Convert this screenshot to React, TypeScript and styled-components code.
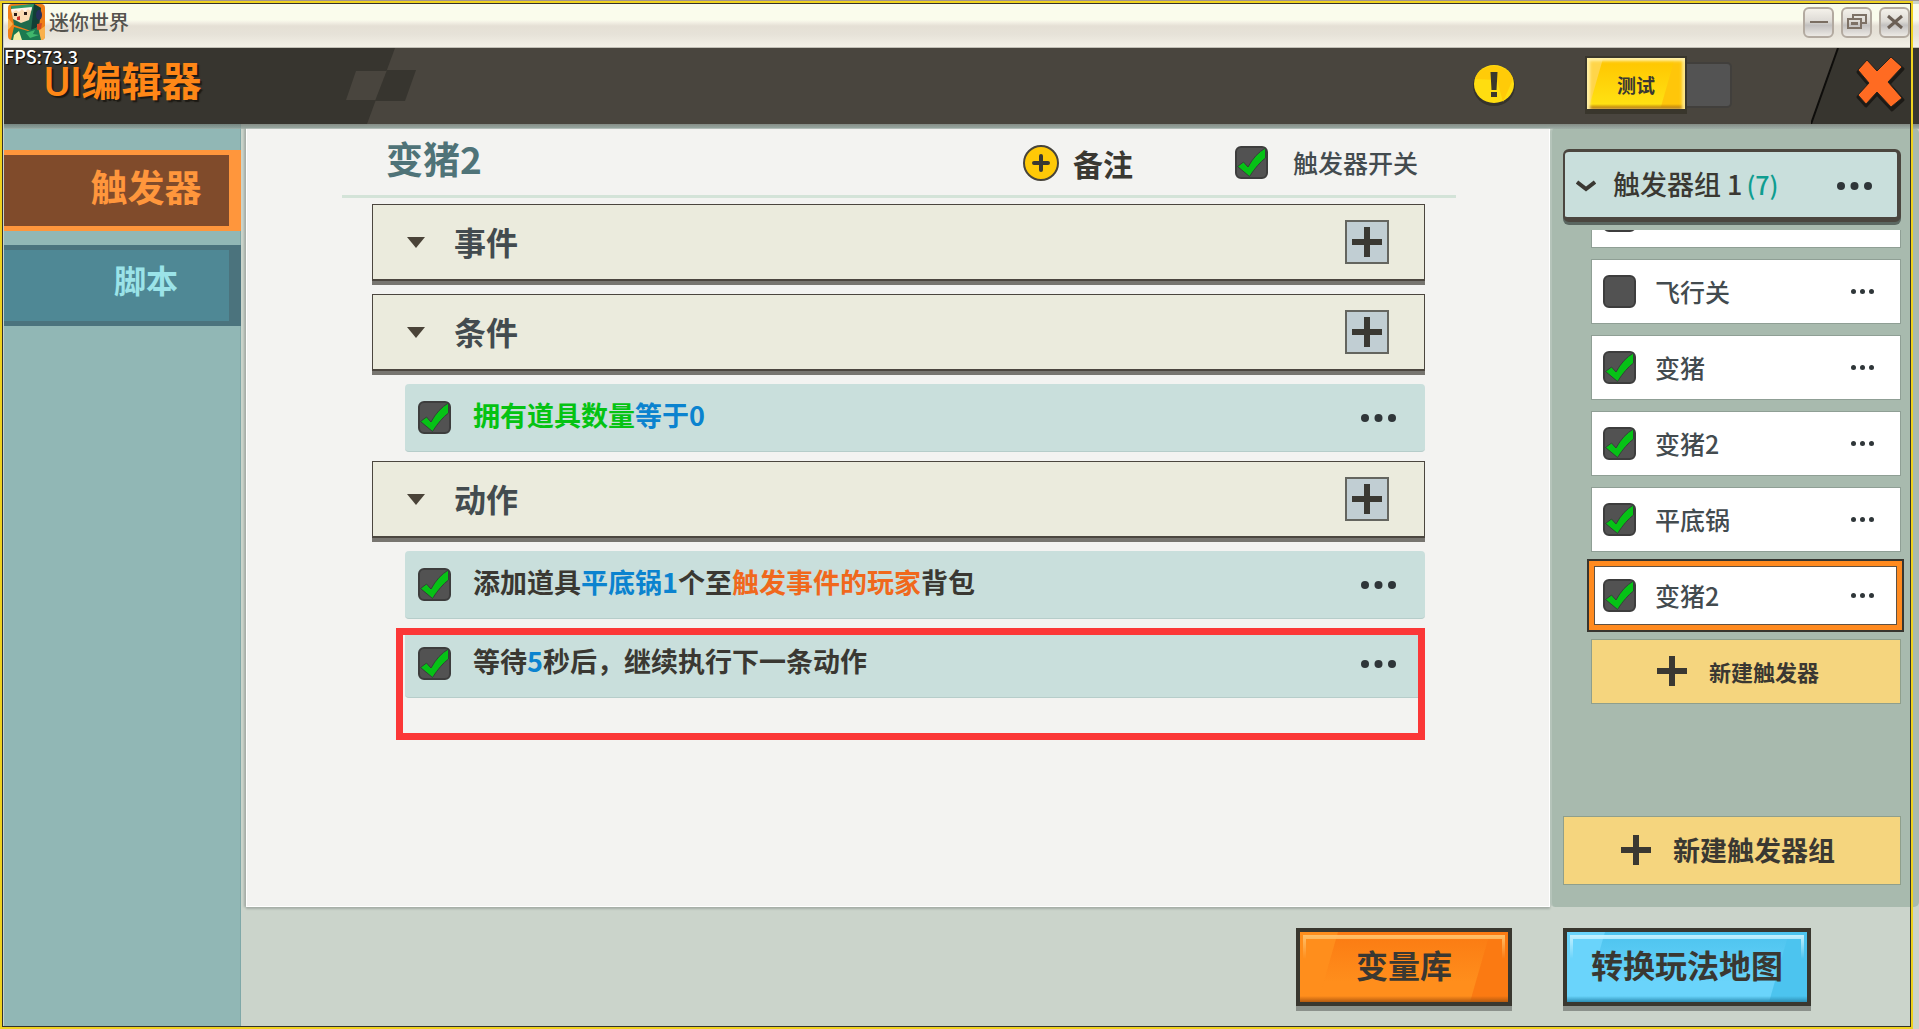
import React from "react";
import styled, { createGlobalStyle, css } from "styled-components";

const ink = "#3a3832";
const slate = "#434b4f";
const mint = "#c9dfdc";
const sage = "#a8baae";
const gold = "#f5d57e";

const GlobalStyle = createGlobalStyle`
  *, *::before, *::after { box-sizing: border-box; }
  body { margin: 0; background: #cbd4cb; }
  body, button, input {
    font-family: "Noto Sans CJK SC", "Noto Sans", sans-serif;
    font-weight: 700;
  }
  button { margin: 0; padding: 0; border: 0; background: none; color: inherit; cursor: pointer; }
  h1, h2, h3, ul { margin: 0; padding: 0; font-weight: 700; }
  ul { list-style: none; }
  svg { display: block; }
`;

const Window = styled.div`
  position: relative;
  display: flex;
  flex-direction: column;
  min-height: 100vh;
  padding: 3px 0 3px 4px;
  border-top: 1px solid #a0948d;
  overflow: hidden;
`;

const Frame = styled.div`
  position: absolute;
  inset: 0 6px 0 0;
  border: 2px solid #efd21f;
  box-shadow: inset 0 0 0 1px #33322c;
  pointer-events: none;
`;

const TitleBar = styled.div`
  display: flex;
  align-items: center;
  height: 44px;
  padding: 0 9px 8px 4px;
  background: linear-gradient(#fafcec 0, #fafcec 16px, #f4f2e6 18px, #e5e0d5 22px, #e6e2d8 30px, #f3f0e6 43px, #8f8d84 44px);
`;

const WindowName = styled.span`
  flex: 1;
  padding-left: 4px;
  font-size: 20px;
  font-weight: 500;
  line-height: 24px;
  color: #55534e;
`;

const WindowButtons = styled.div`
  display: flex;
  gap: 7px;
`;

const WindowButton = styled.button`
  display: grid;
  place-items: center;
  width: 31px;
  height: 31px;
  border: 2px solid #b3aaa0;
  border-radius: 6px;
  background: linear-gradient(#f4f1ea, #dedbd6 45%, #c3c1c0 60%, #ece9e4);
`;

const Header = styled.header`
  position: relative;
  display: flex;
  align-items: center;
  height: 76px;
  background: #49453e;
`;

const HeaderPattern = styled.svg`
  position: absolute;
  left: 0;
  top: 0;
`;

const Fps = styled.span`
  position: absolute;
  left: 0;
  top: 0;
  font-size: 18px;
  font-weight: 500;
  line-height: 16px;
  color: #fff;
  text-shadow: 1px 1px 1px #000;
`;

const AppName = styled.h1`
  position: relative;
  flex: 1;
  padding: 0 0 10px 40px;
  font-size: 40px;
  line-height: 40px;
  color: #ff8717;
  text-shadow: 2px 2px 1px #1d1a14;
`;

const Latin = styled.span`
  font-family: Roboto, sans-serif;
  font-weight: 500;
`;

const HeaderTools = styled.div`
  display: flex;
  align-items: center;
  gap: 70px;
  padding: 0 79px 3px 0;
`;

const TestSwitch = styled.div`
  display: flex;
  align-items: center;
`;

const TestButton = styled.button`
  width: 102px;
  height: 58px;
  padding-top: 4px;
  border: 2px solid #39362c;
  border-bottom-width: 5px;
  color: ${ink};
  font-size: 19px;
  line-height: 24px;
  background:
    linear-gradient(#0000 46px, #b77a0c 50px),
    linear-gradient(106deg, #ffd54a 15px, #0000 16px, #0000 84px, #ffc60a 85px),
    linear-gradient(#ffc400, #ffe112 46px);
  box-shadow: inset 3px 3px 3px #fff0a8, inset -3px 0 3px #ffe98a;
`;

const SwitchTrack = styled.span`
  width: 45px;
  height: 46px;
  border: 2px solid #413f3c;
  border-left: 0;
  border-radius: 0 5px 5px 0;
  background: #535353;
`;

const ClosePanel = styled.div`
  position: relative;
  width: 108px;
  height: 76px;
  padding: 7px 0 0 44px;
`;

const CloseButton = styled.button`
  position: relative;
`;

const Body = styled.div`
  position: relative;
  display: flex;
  flex: 1;
  &::before {
    content: "";
    position: absolute;
    inset: 0 0 auto 0;
    height: 5px;
    background: linear-gradient(#6d746e, #85958f 70%, #a4b0a9);
    opacity: 0.75;
  }
`;

const Sidebar = styled.nav`
  display: flex;
  flex-direction: column;
  gap: 14px;
  width: 237px;
  padding-top: 26px;
  background: #91b7b5;
  border-right: 1px solid #7fa8a8;
`;

const Tab = styled.button<{ $active?: boolean }>`
  height: 81px;
  margin-right: -1px;
  padding: 0 0 ${(p) => (p.$active ? 10 : 14)}px 59px;
  border: solid ${(p) => (p.$active ? "#ff963c" : "#4b737d")};
  border-width: 5px 12px 5px 0;
  background: ${(p) => (p.$active ? "#804b2b" : "#4f8895")};
  color: ${(p) => (p.$active ? "#ff963c" : "#9be3e8")};
  font-size: ${(p) => (p.$active ? 37 : 32)}px;
  line-height: 44px;
`;

const Workspace = styled.div`
  display: flex;
  flex: 1;
  flex-direction: column;
  min-width: 0;
  background: #cbd4cb;
`;

const Panels = styled.div`
  display: flex;
  flex: 1;
  padding: 4px 0 0 5px;
`;

const Editor = styled.main`
  flex: 1;
  min-width: 0;
  padding: 0 93px 0 95px;
  border: 1px solid #fff;
  background: #f3f3f1;
  box-shadow: 0 2px 2px #a5aea7, -2px 0 2px #a5aea7;
`;

const EditorHead = styled.div`
  display: flex;
  align-items: center;
  height: 69px;
  padding: 0 38px 0 44px;
  border-bottom: 3px solid #d3e3d8;
`;

const TriggerName = styled.h2`
  flex: 1;
  padding-bottom: 9px;
  font-size: 37px;
  line-height: 48px;
  color: #4f7378;
`;

const NoteButton = styled.button`
  display: flex;
  align-items: center;
  gap: 14px;
  margin-right: 102px;
  padding-top: 2px;
  font-size: 30px;
  line-height: 36px;
  color: ${ink};
`;

const Toggle = styled.label<{ $gap: number; $size: number }>`
  display: flex;
  align-items: center;
  gap: ${(p) => p.$gap}px;
  font-size: ${(p) => p.$size}px;
  line-height: 36px;
  color: ${slate};
  cursor: pointer;
`;

const SwitchText = styled.span`
  font-weight: 500;
`;

const CheckWrap = styled.span`
  display: grid;
  flex: none;
  > * { grid-area: 1 / 1; }
  > svg { pointer-events: none; }
  > input:not(:checked) + svg { visibility: hidden; }
`;

const CheckInput = styled.input`
  appearance: none;
  width: 33px;
  height: 33px;
  margin: 0;
  border: 2px solid #3d3d3d;
  border-radius: 6px;
  background: #525252;
`;

const Blocks = styled.div`
  display: flex;
  flex-direction: column;
  gap: 9px;
  padding: 6px 31px 0 30px;
`;

const BlockHead = styled.div`
  display: flex;
  align-items: center;
  height: 77px;
  margin-bottom: 4px;
  padding: 0 35px 0 34px;
  border: 1px solid #4b463f;
  border-bottom-width: 2px;
  background: #ebebdd;
  box-shadow: 0 4px 0 #777570;
`;

const BlockTitle = styled.h3`
  flex: 1;
  padding: 0 0 2px 29px;
  font-size: 32px;
  line-height: 40px;
  color: ${slate};
`;

const AddButton = styled.button`
  display: grid;
  place-items: center;
  width: 44px;
  height: 44px;
  border: 2px solid #64655f;
  background: #c1ced3;
`;

const Step = styled.div`
  position: relative;
  display: flex;
  align-items: center;
  justify-content: space-between;
  height: 68px;
  margin-left: 33px;
  padding: 0 29px 0 13px;
  border-bottom: 1px solid #b6cdca;
  border-radius: 4px;
  background: ${mint};
  & + & { margin-top: 2px; }
`;

const StepText = styled.span`
  padding-bottom: 6px;
  color: ${ink};
`;

const Mark = styled.span<{ $tone: "green" | "blue" | "orange" }>`
  color: ${(p) => ({ green: "#05c313", blue: "#0b83cf", orange: "#f0681c" })[p.$tone]};
`;

const Highlight = styled.span`
  position: absolute;
  inset: -2px 0 -43px -9px;
  border: 7px solid #fb3737;
  pointer-events: none;
`;

const Groups = styled.aside`
  display: flex;
  flex-direction: column;
  width: 369px;
  padding: 21px 18px 22px 11px;
  border-left: 2px solid #b5c4ba;
  border-radius: 5px;
  background: ${sage};
`;

const GroupHead = styled.div`
  display: flex;
  align-items: center;
  height: 73px;
  margin-bottom: 8px;
  padding: 3px 25px 0 11px;
  border: solid #4b463f;
  border-width: 3px 4px 5px 2px;
  border-radius: 6px;
  background: ${mint};
  box-shadow: 0 3px 0 #5a6660;
`;

const GroupName = styled.span`
  flex: 1;
  padding: 0 0 4px 17px;
  font-size: 27px;
  font-weight: 500;
  line-height: 36px;
  color: ${ink};
`;

const Count = styled.span`
  margin-left: 4px;
  font-size: 25px;
  color: #0f9d90;
`;

const TriggerList = styled.ul`
  display: flex;
  flex-direction: column;
  gap: 11px;
  margin-left: 28px;
`;

const Peek = styled.li`
  display: flex;
  flex-direction: column;
  justify-content: flex-end;
  height: 18px;
  overflow: hidden;
`;

const triggerBox = css`
  height: 65px;
  border: 1px solid #8f9f95;
  background: #fff;
`;

const selectedBox = css`
  height: 73px;
  margin: -4px -3px -4px -4px;
  border: 2px solid #37352f;
  background: #fff;
  box-shadow: inset 0 0 0 5px #ff8a1f, inset 0 0 0 6px #5d5144;
`;

const Trigger = styled.div<{ $selected?: boolean }>`
  display: flex;
  flex: none;
  align-items: center;
  justify-content: space-between;
  padding: 0 ${(p) => (p.$selected ? 28 : 26)}px 0 ${(p) => (p.$selected ? 14 : 11)}px;
  ${(p) => (p.$selected ? selectedBox : triggerBox)}
`;

const TriggerText = styled.span`
  padding-bottom: 1px;
  font-weight: 500;
`;

const GoldButton = styled.button<{ $group?: boolean }>`
  display: flex;
  align-items: center;
  justify-content: center;
  gap: ${(p) => (p.$group ? 22 : 22)}px;
  height: ${(p) => (p.$group ? 69 : 65)}px;
  width: 100%;
  padding: 0 ${(p) => (p.$group ? 8 : 16)}px 2px 0;
  border: 1px solid #8f9f8c;
  background: ${gold};
  color: ${ink};
  font-size: ${(p) => (p.$group ? 27 : 22)}px;
  line-height: 36px;
`;

const Spacer = styled.div`
  flex: 1;
`;

const Footer = styled.footer`
  display: flex;
  justify-content: flex-end;
  gap: 51px;
  padding: 21px 108px 20px 0;
`;

const GlossButton = styled.button<{ $blue?: boolean }>`
  position: relative;
  height: 78px;
  padding: 0 ${(p) => (p.$blue ? 24 : 56)}px 6px;
  border: 4px solid #39372f;
  font-size: 32px;
  line-height: 40px;
  color: ${ink};
  box-shadow: 0 5px 0 #8b918b;
  background: ${(p) =>
    p.$blue
      ? `linear-gradient(#0000 64px, #2c8fb5 70px),
         linear-gradient(106deg, #6ad4fb 36px, #0000 37px, #0000 calc(100% - 37px), #4cc4ef calc(100% - 36px)),
         linear-gradient(#4cc3ee, #6ad4fb 50px)`
      : `linear-gradient(#0000 64px, #b45a10 70px),
         linear-gradient(106deg, #ff8e1c 36px, #0000 37px, #0000 calc(100% - 37px), #fb7a12 calc(100% - 36px)),
         linear-gradient(#fb7a12, #ff8e1c 50px)`};
  &::before {
    content: "";
    position: absolute;
    inset: 3px 3px auto 3px;
    height: 24px;
    border: solid ${(p) => (p.$blue ? "#c4f1ff" : "#ffc069")};
    border-width: 4px 3px 0;
    mask-image: linear-gradient(#000, #0000);
  }
`;

function Check({ checked = true, label }: { checked?: boolean; label?: string }) {
  return (
    <CheckWrap>
      <CheckInput type="checkbox" defaultChecked={checked} aria-label={label} />
      <svg width="33" height="33" viewBox="0 0 33 33">
        <path
          d="M2.5 20.5 8.500 16 13 21Q20 8 30.500 2V12Q22.500 18 14.500 30.500Z"
          fill="#06c216"
          stroke="#36403a"
          strokeWidth="1"
        />
      </svg>
    </CheckWrap>
  );
}

function Dots({ small }: { small?: boolean }) {
  const r = small ? 2.5 : 4;
  const step = small ? 9 : 13.5;
  const w = step * 2 + r * 2;
  return (
    <button aria-label="更多">
      <svg width={w} height={r * 2} viewBox={`0 0 ${w} ${r * 2}`} fill="#2f3639">
        {[0, 1, 2].map((i) => (
          <circle key={i} cx={r + step * i} cy={r} r={r} />
        ))}
      </svg>
    </button>
  );
}

const Plus = () => (
  <svg width="30" height="30" viewBox="0 0 30 30" fill={ink}>
    <path d="M12 0h6v12h12v6H18v12h-6V18H0v-6h12z" />
  </svg>
);

function Logo() {
  return (
    <svg width="37" height="36" viewBox="0 0 37 36">
      <defs>
        <clipPath id="logo-round"><rect width="37" height="36" rx="4" /></clipPath>
      </defs>
      <g clipPath="url(#logo-round)">
        <rect width="37" height="36" fill="#ef7d17" />
        <path d="M0 14 5 20 0 26zM26 30 37 22V36H22z" fill="#f9b04c" />
        <path d="M3 3 26 0 33 4 31 22 23 27 6 21z" fill="#1f6a4c" />
        <path d="M26 0 33 4 31 22 23 27z" fill="#123f36" />
        <path d="M3 2 26 0 24 5 4 6z" fill="#2f9a63" />
        <path d="M3 6 24 4 21 16 13 19 5 15z" fill="#fbdcb4" />
        <path d="M3 5 24 3 23 7 20 5 17 8 14 5 11 8 8 6 4 9z" fill="#fff3ea" />
        <path d="M6 9h3v3H6zM16 8h3v3h-3z" fill="#2a1d18" />
        <path d="M9 13 12 12 12 16 9 16z" fill="#d0342a" />
        <ellipse cx="31" cy="11" rx="3" ry="5" fill="#25305a" />
        <path d="M6 23 20 27 30 23 33 36H3z" fill="#1c7a50" />
        <path d="M6 31 11 27 14 36H5z" fill="#f5f0a6" />
        <path d="M18 29 27 26 25 30 31 31 22 34z" fill="#3fb76c" />
        <path d="M29 20 34 19 33 25 29 26z" fill="#cf4a25" />
      </g>
    </svg>
  );
}

function Block({ title }: { title: string }) {
  return (
    <BlockHead>
      <svg width="18" height="11" viewBox="0 0 18 11"><path d="M0 0h18L9 11z" fill="#4a4338" /></svg>
      <BlockTitle>{title}</BlockTitle>
      <AddButton aria-label={`添加${title}`}><Plus /></AddButton>
    </BlockHead>
  );
}

function StepRow({ children, marked }: { children: React.ReactNode; marked?: boolean }) {
  return (
    <Step>
      <Toggle $gap={22} $size={27}>
        <Check />
        <StepText>{children}</StepText>
      </Toggle>
      <Dots />
      {marked && <Highlight />}
    </Step>
  );
}

const triggers = [
  { name: "飞行关", on: false },
  { name: "变猪", on: true },
  { name: "变猪2", on: true },
  { name: "平底锅", on: true },
  { name: "变猪2", on: true, selected: true },
];

export default function App() {
  return (
    <Window>
      <GlobalStyle />
      <TitleBar>
        <Logo />
        <WindowName>迷你世界</WindowName>
        <WindowButtons>
          <WindowButton aria-label="最小化">
            <svg width="20" height="20" viewBox="0 0 20 20"><path d="M1 10h18" stroke="#7a6e62" strokeWidth="2" /></svg>
          </WindowButton>
          <WindowButton aria-label="还原">
            <svg width="20" height="20" viewBox="0 0 20 20" fill="none" stroke="#7d7166" strokeWidth="2">
              <path d="M1 7h13v9H1zM5 11h5v1H5zM6 6V3h13v8h-4" />
            </svg>
          </WindowButton>
          <WindowButton aria-label="关闭">
            <svg width="20" height="20" viewBox="0 0 20 20"><path d="M3 4l14 12M17 4L3 16" stroke="#6b5f55" strokeWidth="3" /></svg>
          </WindowButton>
        </WindowButtons>
      </TitleBar>

      <Header>
        <HeaderPattern width="416" height="76" viewBox="0 0 416 76">
          <path d="M0 0H391L363 76H0z" fill="#37352f" />
          <path d="M352 23H383L372 52H342z" fill="#49453e" />
          <path d="M383 22H412L401 53H371z" fill="#37352f" />
        </HeaderPattern>
        <AppName><Latin>UI</Latin>编辑器</AppName>
        <Fps>FPS:73.3</Fps>
        <HeaderTools>
          <button aria-label="提示">
            <svg width="42" height="42" viewBox="0 0 42 42">
              <ellipse cx="21" cy="22" rx="21" ry="20" fill="#35332c" />
              <ellipse cx="21" cy="20" rx="20" ry="19" fill="#ffdd10" />
              <path d="M2 15A20 19 0 0 1 40 15L30 38 24 16z" fill="#ffcb08" />
              <path d="M17.500 8h7l-1 18h-5zM18 28h6v5h-6z" fill="#3b372c" />
            </svg>
          </button>
          <TestSwitch>
            <TestButton>测试</TestButton>
            <SwitchTrack />
          </TestSwitch>
        </HeaderTools>
        <ClosePanel>
          <HeaderPattern width="108" height="76" viewBox="0 0 108 76">
            <path d="M27 0H108V76H0z" fill="#37352f" />
            <path d="M27 0 0 76" stroke="#0e0d0b" strokeWidth="2" />
          </HeaderPattern>
          <CloseButton aria-label="关闭编辑器">
            <svg width="52" height="58" viewBox="0 0 52 58" strokeLinejoin="round">
              <path d="M12 7 22 18 36 4 48 14 34 29 48 45 37 55 22 39 11 51 3 42 14 30 3 17z" fill="#1c1a16" stroke="#1c1a16" strokeWidth="3" />
              <path d="M12 5 22 16 36 2 47 12 33 27 47 43 36 52 22 37 11 49 3 40 14 28 3 15z" fill="#ff6b22" stroke="#2a241d" strokeWidth="1" />
            </svg>
          </CloseButton>
        </ClosePanel>
      </Header>

      <Body>
        <Sidebar>
          <Tab $active>触发器</Tab>
          <Tab>脚本</Tab>
        </Sidebar>

        <Workspace>
          <Panels>
            <Editor>
              <EditorHead>
                <TriggerName>变猪2</TriggerName>
                <NoteButton>
                  <svg width="36" height="36" viewBox="0 0 36 36">
                    <circle cx="18" cy="18" r="17" fill="#ffc907" stroke="#47443b" strokeWidth="2" />
                    <path d="M18 11v14M11 18h14" stroke={ink} strokeWidth="4" strokeLinecap="round" />
                  </svg>
                  备注
                </NoteButton>
                <Toggle $gap={25} $size={25}>
                  <Check />
                  <SwitchText>触发器开关</SwitchText>
                </Toggle>
              </EditorHead>
              <Blocks>
                <Block title="事件" />
                <Block title="条件" />
                <StepRow>
                  <Mark $tone="green">拥有道具数量</Mark>
                  <Mark $tone="blue">等于0</Mark>
                </StepRow>
                <Block title="动作" />
                <StepRow>
                  添加道具<Mark $tone="blue">平底锅1</Mark>个至<Mark $tone="orange">触发事件的玩家</Mark>背包
                </StepRow>
                <StepRow marked>
                  等待<Mark $tone="blue">5</Mark>秒后，继续执行下一条动作
                </StepRow>
              </Blocks>
            </Editor>

            <Groups>
              <GroupHead>
                <svg width="20" height="12" viewBox="0 0 20 12" fill="none">
                  <path d="M1 2 10 9 19 2" stroke={ink} strokeWidth="4" />
                </svg>
                <GroupName>触发器组 1<Count>(7)</Count></GroupName>
                <Dots />
              </GroupHead>
              <TriggerList>
                <Peek>
                  <Trigger><Check label="触发器" /></Trigger>
                </Peek>
                {triggers.map((t, i) => (
                  <li key={i}>
                    <Trigger $selected={t.selected}>
                      <Toggle $gap={19} $size={25}>
                        <Check checked={t.on} />
                        <TriggerText>{t.name}</TriggerText>
                      </Toggle>
                      <Dots small />
                    </Trigger>
                  </li>
                ))}
                <li>
                  <GoldButton><Plus />新建触发器</GoldButton>
                </li>
              </TriggerList>
              <Spacer />
              <GoldButton $group><Plus />新建触发器组</GoldButton>
            </Groups>
          </Panels>

          <Footer>
            <GlossButton>变量库</GlossButton>
            <GlossButton $blue>转换玩法地图</GlossButton>
          </Footer>
        </Workspace>
      </Body>
      <Frame />
    </Window>
  );
}
